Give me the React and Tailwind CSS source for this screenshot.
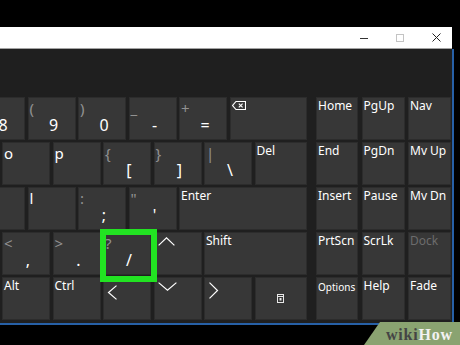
import React from "react";

const base =
  "h-[43px] shrink-0 bg-[#373737] border border-[#2c2c2c] flex flex-col overflow-hidden";

function CharKey({ w = "w-[48px]", s, p }) {
  return (
    <div className={`${base} ${w}`}>
      <div className="h-[20px] pl-[1px] text-[15px] leading-[20px] text-[#929292]">{s}</div>
      <div className="-mt-[3px] pl-[4px] text-center text-[16px] leading-[20px] text-white">{p}</div>
    </div>
  );
}

function LetterKey({ w = "w-[48px]", l }) {
  return (
    <div className={`${base} ${w}`}>
      <div className="pl-[1px] text-[15px] leading-[20px] text-white">{l}</div>
    </div>
  );
}

function LabelKey({ w = "w-[48px]", t, dim = false, small = false }) {
  return (
    <div className={`${base} ${w}`}>
      <div
        className={`pl-[1px] leading-[16px] ${small ? "text-[10px] pt-[1px]" : "text-[12px]"} ${
          dim ? "text-[#6c6c6c]" : "text-white"
        }`}
      >
        {t}
      </div>
    </div>
  );
}

function IconKey({ w = "w-[48px]", children, center = false }) {
  return (
    <div className={`${base} ${w} ${center ? "items-center justify-center" : ""}`}>{children}</div>
  );
}

export default function App() {
  return (
    <div className="relative w-[460px] h-[345px] bg-black overflow-hidden font-['Noto_Sans',sans-serif]">
      <div className="h-[27px]" />
      <div className="w-[454px]">
        {/* title bar */}
        <div className="h-[22px] w-[452px] bg-white border-b border-[#a3a3a3] flex items-center justify-end gap-[28px] pr-[11px]">
          <svg width="8" height="8" viewBox="0 0 8 8">
            <line x1="0" y1="4.5" x2="8" y2="4.5" stroke="#333" strokeWidth="1" />
          </svg>
          <svg width="8" height="8" viewBox="0 0 8 8">
            <rect x="0.5" y="0.5" width="7" height="7" fill="none" stroke="#c4c4c4" strokeWidth="1" />
          </svg>
          <svg width="9" height="9" viewBox="0 0 9 9">
            <path d="M0.5 0.5 L8.5 8.5 M8.5 0.5 L0.5 8.5" stroke="#222" strokeWidth="1" />
          </svg>
        </div>

        {/* body */}
        <div className="h-[276px] bg-[#1f1f1f] border-r-2 border-b-2 border-[#2760a6] pt-[48px] flex">
          <div className="w-[307px] shrink-0 overflow-hidden flex flex-col gap-[2px]">
            {/* row 1 */}
            <div className="flex gap-[2.5px] -ml-[23px]">
              <CharKey s="" p="8" />
              <CharKey s="(" p="9" />
              <CharKey s=")" p="0" />
              <CharKey s="_" p="-" />
              <CharKey s="+" p="=" />
              <IconKey w="w-[77.5px]">
                <svg className="ml-[1.5px] mt-[3px]" width="14" height="9" viewBox="0 0 14 9">
                  <path d="M4 0.5 H13.5 V8.5 H4 L0.6 4.5 Z" fill="none" stroke="white" strokeWidth="1.1" />
                  <path d="M6.8 2.6 L10.6 6.4 M10.6 2.6 L6.8 6.4" stroke="white" strokeWidth="1.1" />
                </svg>
              </IconKey>
            </div>
            {/* row 2 */}
            <div className="flex gap-[2.5px] ml-[2px]">
              <LetterKey l="o" />
              <LetterKey l="p" />
              <CharKey s="{" p="[" />
              <CharKey s="}" p="]" />
              <CharKey s="|" p="\" />
              <LabelKey w="w-[52.5px]" t="Del" />
            </div>
            {/* row 3 */}
            <div className="flex gap-[2.5px] -ml-[23px]">
              <LetterKey l="" />
              <LetterKey l="l" />
              <CharKey s=":" p=";" />
              <CharKey s={'"'} p="'" />
              <LabelKey w="w-[128px]" t="Enter" />
            </div>
            {/* row 4 */}
            <div className="flex gap-[2.5px] ml-[2px]">
              <CharKey s="<" p="," />
              <CharKey s=">" p="." />
              <CharKey s="?" p="/" />
              <IconKey>
                <svg className="ml-[3px] mt-[4px]" width="17" height="9" viewBox="0 0 17 9">
                  <polyline points="0.6,8.4 8.5,0.8 16.4,8.4" fill="none" stroke="white" strokeWidth="1.2" />
                </svg>
              </IconKey>
              <LabelKey w="w-[103px]" t="Shift" />
            </div>
            {/* row 5 */}
            <div className="flex gap-[2.5px] ml-[2px]">
              <LabelKey t="Alt" />
              <LabelKey t="Ctrl" />
              <IconKey>
                <svg className="ml-[3px] mt-[7px]" width="11" height="15" viewBox="0 0 11 15">
                  <polyline points="9.5,0.6 1.5,7.5 9.5,14.4" fill="none" stroke="white" strokeWidth="1.2" />
                </svg>
              </IconKey>
              <IconKey>
                <svg className="ml-[3px] mt-[4px]" width="19" height="9" viewBox="0 0 19 9">
                  <polyline points="0.6,0.6 9.5,8.2 18.4,0.6" fill="none" stroke="white" strokeWidth="1.2" />
                </svg>
              </IconKey>
              <IconKey>
                <svg className="ml-[3px] mt-[4px]" width="11" height="17" viewBox="0 0 11 17">
                  <polyline points="1.5,0.6 9.5,8.5 1.5,16.4" fill="none" stroke="white" strokeWidth="1.2" />
                </svg>
              </IconKey>
              <IconKey w="w-[52.5px]" center>
                <svg width="7" height="9" viewBox="0 0 7 9">
                  <rect x="0.5" y="0.5" width="6" height="8" fill="none" stroke="#e8e8e8" strokeWidth="1" />
                  <line x1="0.5" y1="2.5" x2="6.5" y2="2.5" stroke="#e8e8e8" strokeWidth="1" />
                  <rect x="2.5" y="4" width="2" height="2.5" fill="#e8e8e8" />
                </svg>
              </IconKey>
            </div>
          </div>

          {/* right section */}
          <div className="ml-[9px] grid grid-cols-[42px_43px_43px] grid-rows-[repeat(5,43px)] gap-x-[3.5px] gap-y-[2px]">
            <LabelKey w="w-[42px]" t="Home" />
            <LabelKey w="w-[43px]" t="PgUp" />
            <LabelKey w="w-[43px]" t="Nav" />
            <LabelKey w="w-[42px]" t="End" />
            <LabelKey w="w-[43px]" t="PgDn" />
            <LabelKey w="w-[43px]" t="Mv Up" />
            <LabelKey w="w-[42px]" t="Insert" />
            <LabelKey w="w-[43px]" t="Pause" />
            <LabelKey w="w-[43px]" t="Mv Dn" />
            <LabelKey w="w-[42px]" t="PrtScn" />
            <LabelKey w="w-[43px]" t="ScrLk" />
            <LabelKey w="w-[43px]" t="Dock" dim />
            <LabelKey w="w-[42px]" t="Options" small />
            <LabelKey w="w-[43px]" t="Help" />
            <LabelKey w="w-[43px]" t="Fade" />
          </div>
        </div>
      </div>

      {/* green highlight */}
      <div className="absolute left-[100px] top-[229px] w-[57px] h-[53px] border-[6px] border-[#22e322]" />

      {/* wikiHow watermark */}
      <div className="absolute left-[364px] top-[322px] w-[96px] h-[23px] overflow-hidden bg-[#8aa371] [clip-path:polygon(16px_0,100%_0,100%_100%,0_100%)]">
        <div className="pl-[22px] font-['Liberation_Serif',serif] font-bold text-[16px] leading-[26px] tracking-[0.8px] whitespace-nowrap">
          <span className="text-[#454545]">wiki</span>
          <span className="text-[#f2f2f2]">How</span>
        </div>
      </div>
    </div>
  );
}
